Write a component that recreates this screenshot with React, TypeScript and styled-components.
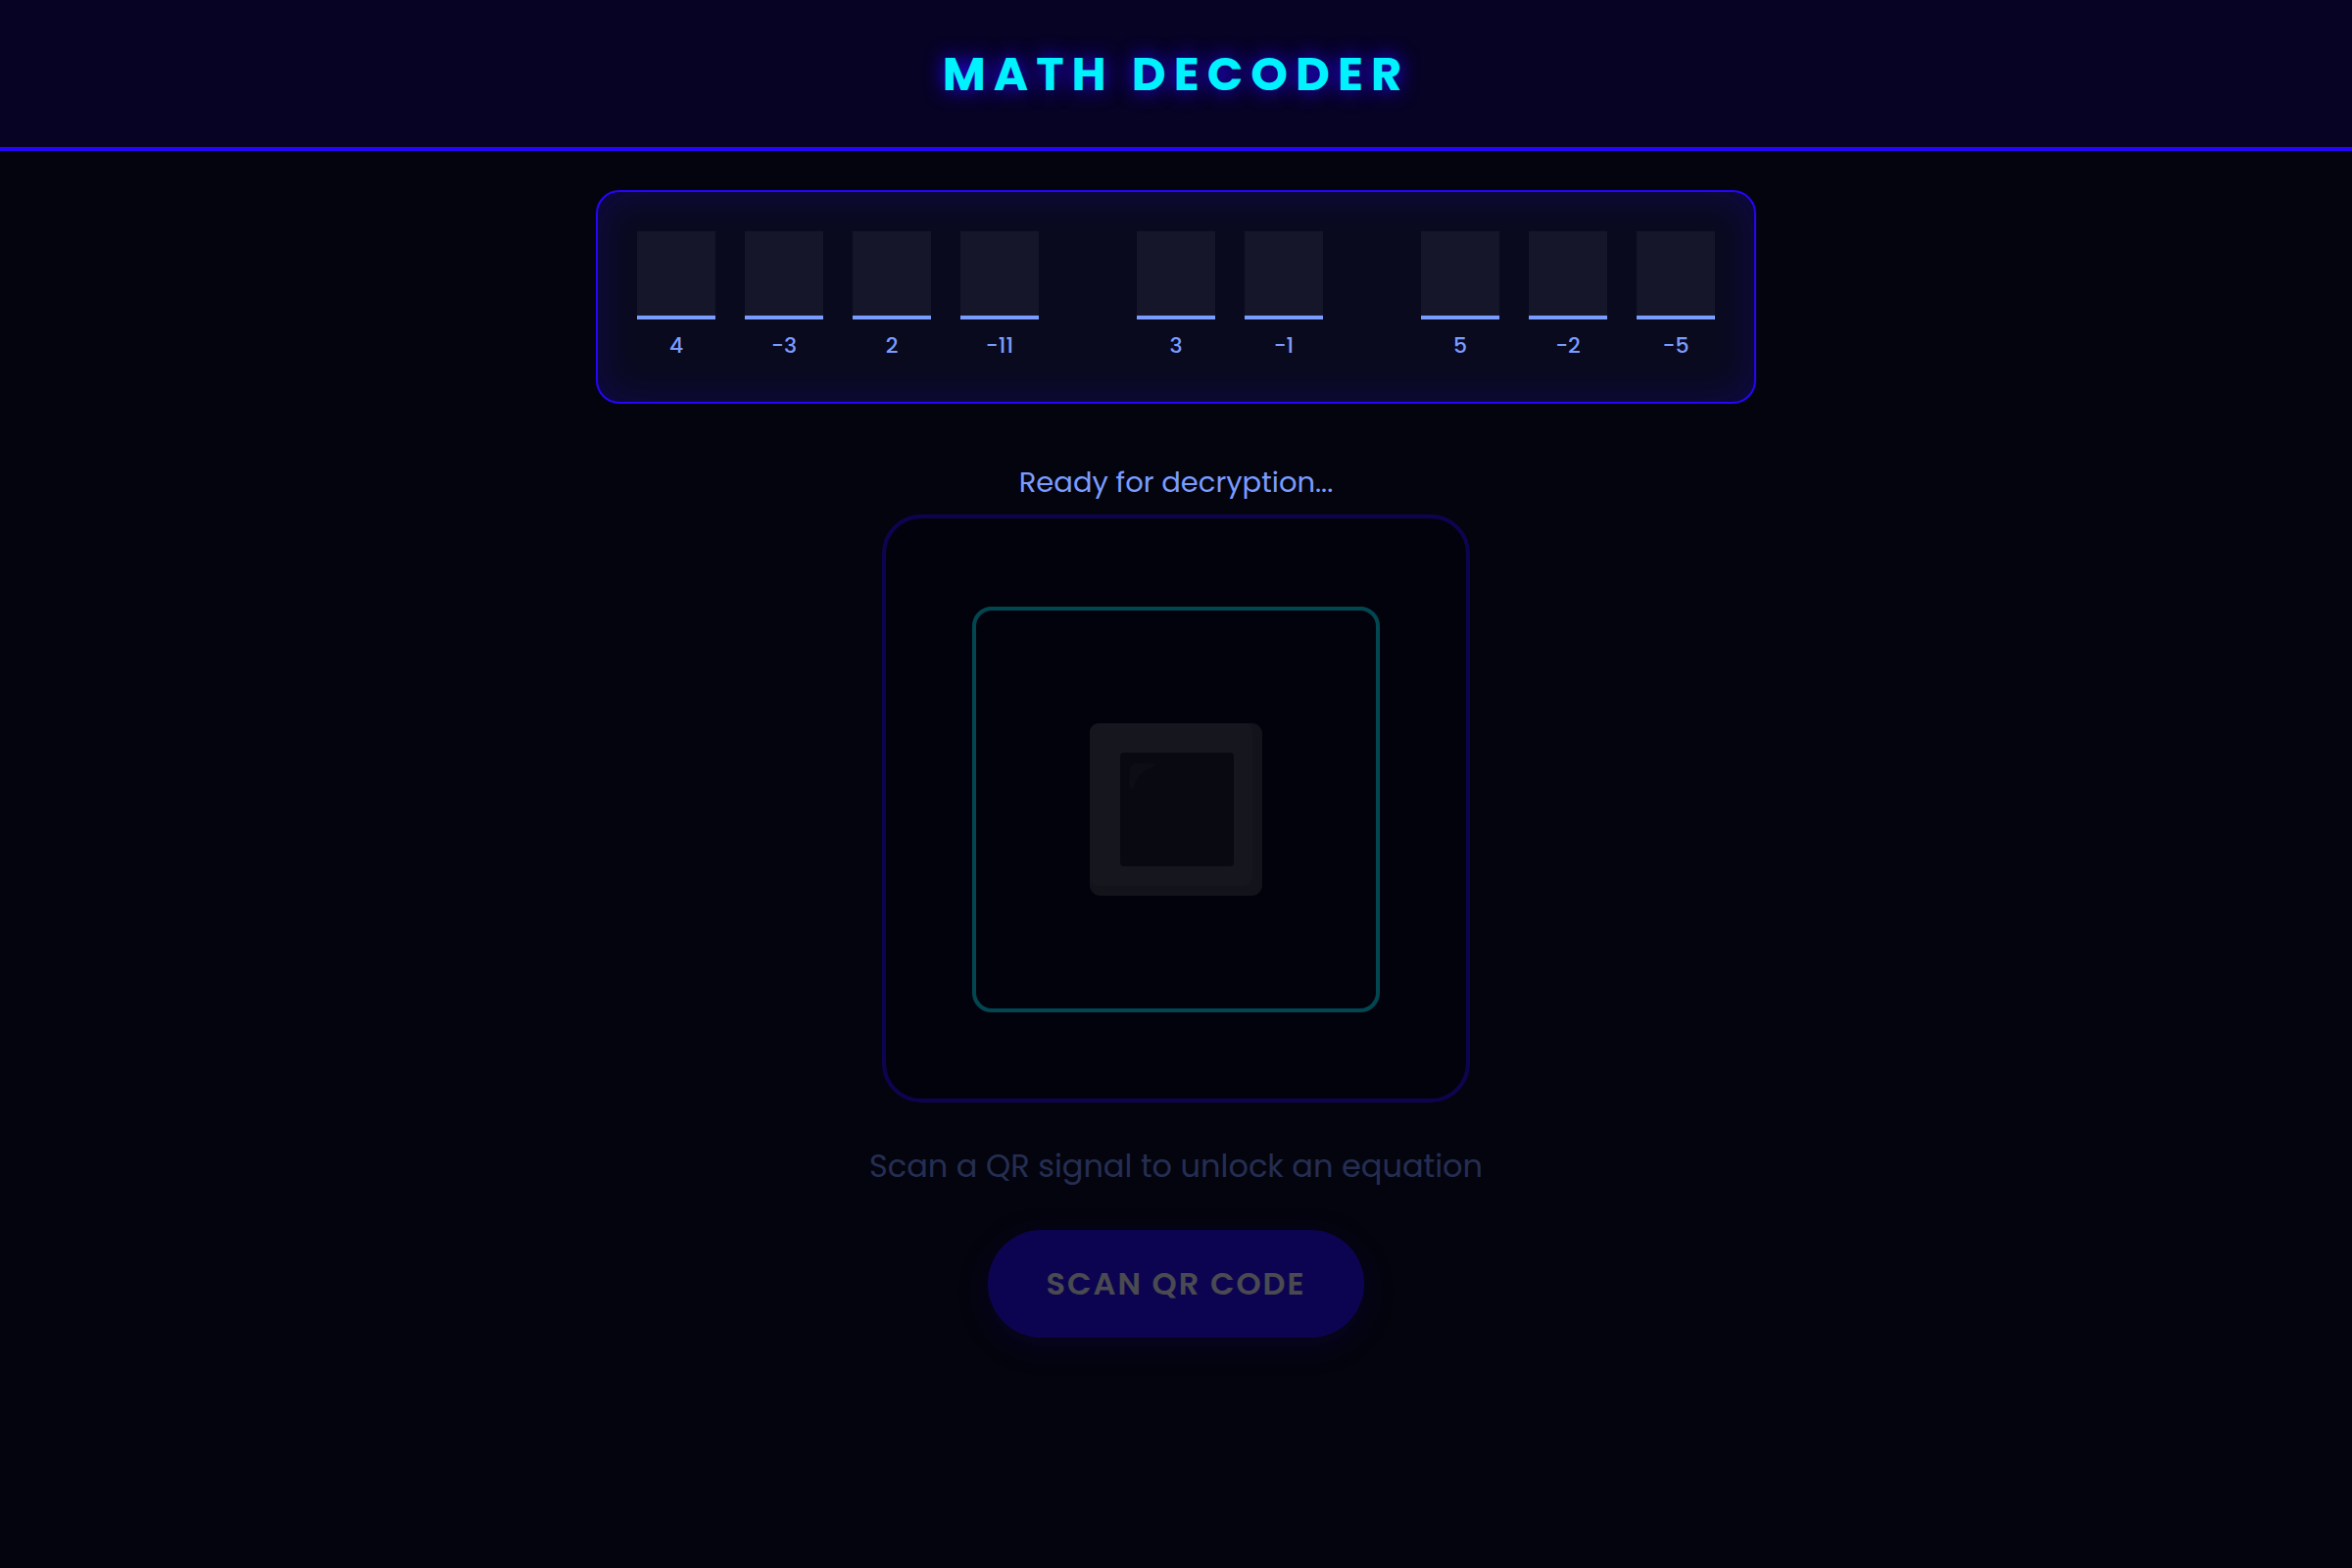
import React from 'react';
import styled, { createGlobalStyle } from 'styled-components';

const GlobalStyle = createGlobalStyle`
  *, *::before, *::after { box-sizing: border-box; }
  body {
    margin: 0;
    background: #04040e;
    color: #7a9cff;
    font-family: Poppins, Inter, "Noto Sans", sans-serif;
  }
`;

const Page = styled.div`
  min-height: 100vh;
  display: flex;
  flex-direction: column;
`;

const Header = styled.header`
  padding: 40px 40px 38px;
  text-align: center;
  background: #070325;
  border-bottom: 4px solid #2605ff;
`;

const Title = styled.h1`
  margin: 0;
  font-size: 48px;
  line-height: 72px;
  font-weight: 700;
  letter-spacing: 8px;
  text-transform: uppercase;
  color: #00f2ff;
  text-shadow: 0 0 20px #2605ff;
`;

const Main = styled.main`
  display: flex;
  flex-direction: column;
  align-items: center;
  padding: 40px;
`;

const Phrase = styled.section`
  display: flex;
  flex-wrap: wrap;
  justify-content: center;
  gap: 40px 100px;
  padding: 40px;
  background: #0a0a1f;
  border: 2px solid #2605ff;
  border-radius: 24px;
  box-shadow: inset 0 0 40px rgba(38, 5, 255, 0.2);
`;

const Word = styled.div`
  display: flex;
  gap: 30px;
`;

const Slot = styled.div`
  display: flex;
  flex-direction: column;
  align-items: center;
  gap: 10px;
`;

const Blank = styled.div`
  width: 80px;
  height: 90px;
  background: rgba(255, 255, 255, 0.05);
  border-bottom: 4px solid #7a9cff;
`;

const Clue = styled.span`
  font-size: 22px;
  line-height: 34px;
  font-weight: 500;
`;

const Status = styled.p`
  margin: 60px 0 12px;
  font-size: 29px;
  line-height: 41px;
`;

const Scanner = styled.section`
  display: flex;
  flex-direction: column;
  align-items: center;
  opacity: 0.28;
`;

const Frame = styled.div`
  display: flex;
  align-items: center;
  justify-content: center;
  width: 600px;
  height: 600px;
  padding-top: 2px;
  background: #000008;
  border: 4px solid #2605ff;
  border-radius: 40px;
`;

const Target = styled.div`
  display: flex;
  align-items: center;
  justify-content: center;
  width: 416px;
  height: 414px;
  border: 4px solid #00f2ff;
  border-radius: 20px;
`;

const Hint = styled.p`
  margin: 40px 0;
  font-size: 32px;
  line-height: 50px;
`;

const ScanButton = styled.button`
  padding: 30px 59px;
  border: 0;
  border-radius: 60px;
  background: #2605ff;
  color: #fff;
  font-family: inherit;
  font-size: 32px;
  line-height: 50px;
  font-weight: 600;
  letter-spacing: 2px;
  text-transform: uppercase;
  box-shadow: 0 8px 30px rgba(38, 5, 255, 0.3);
`;

const words = [
  ['4', '-3', '2', '-11'],
  ['3', '-1'],
  ['5', '-2', '-5'],
];

function KeyIcon() {
  return (
    <svg width="176" height="176" viewBox="0 0 176 176" aria-hidden="true">
      <rect width="176" height="176" rx="11" fill="#3a3a40" />
      <rect width="166" height="166" rx="9" fill="#444449" />
      <rect x="31" y="30" width="116" height="116" rx="4" fill="#17171d" />
      <path d="M46 41h19c3 1 1 3-2 4-9 3-14 9-17 17-2 5-3 6-5 5-1-6-1-12 0-19 0-4 2-6 5-7z" fill="#26262c" />
    </svg>
  );
}

export default function App() {
  return (
    <>
      <GlobalStyle />
      <Page>
        <Header>
          <Title>Math Decoder</Title>
        </Header>
        <Main>
          <Phrase>
            {words.map((clues, i) => (
              <Word key={i}>
                {clues.map((clue) => (
                  <Slot key={clue}>
                    <Blank />
                    <Clue>{clue}</Clue>
                  </Slot>
                ))}
              </Word>
            ))}
          </Phrase>
          <Status role="status">Ready for decryption...</Status>
          <Scanner>
            <Frame>
              <Target>
                <KeyIcon />
              </Target>
            </Frame>
            <Hint>Scan a QR signal to unlock an equation</Hint>
            <ScanButton type="button">Scan QR Code</ScanButton>
          </Scanner>
        </Main>
      </Page>
    </>
  );
}
